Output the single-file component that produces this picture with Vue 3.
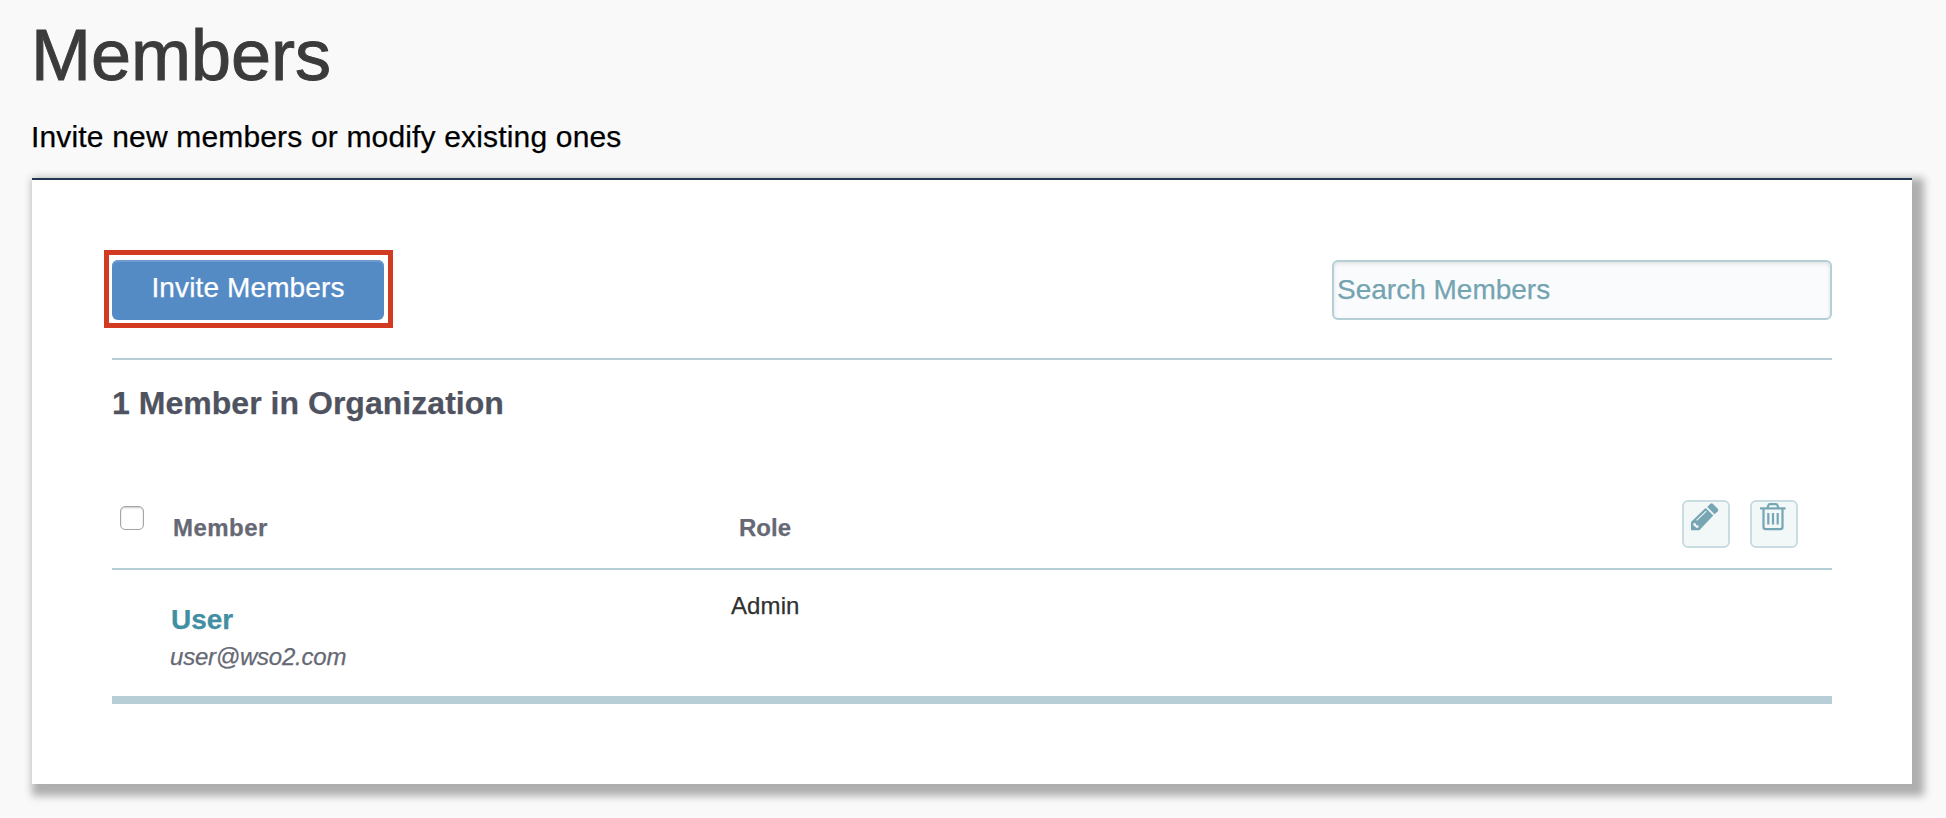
<script setup>
import { ref } from 'vue'

const members = [{ name: 'User', email: 'user@wso2.com', role: 'Admin' }]
const query = ref('')
const allSelected = ref(false)
</script>

<template>
  <main class="page">
    <h1 class="title">Members</h1>
    <p class="subtitle">Invite new members or modify existing ones</p>
    <section class="card">
      <div class="toolbar">
        <div class="highlight">
          <button class="invite" type="button">Invite Members</button>
        </div>
        <input v-model="query" class="search" type="text" placeholder="Search Members" />
      </div>
      <h2 class="count">1 Member in Organization</h2>
      <div class="row head">
        <label class="check"><input v-model="allSelected" type="checkbox" /></label>
        <div class="col-member">Member</div>
        <div class="col-role">Role</div>
        <div class="actions">
          <button class="icon-btn" type="button" aria-label="Edit">
            <svg width="28" height="28" viewBox="0 0 28 28">
              <path d="M0 27.3V18.9L14.6 4.9L22.3 12.5L8.3 27.3Z" fill="#76a5b3" />
              <path d="M16.2 3.9L19.2 1Q20.6-.3 22 1L26.5 5.4Q28 7 26.6 8.5L23.6 11.3Z" fill="#76a5b3" />
              <path d="M5.6 17.3L15.2 8.1" stroke="#f2f7f7" stroke-width="1.1" />
              <path d="M2.4 20L4.6 20.2L5.2 22L7.4 22.6L7.6 24.6L5.6 25L2.4 22.2Z" fill="#f2f7f7" />
            </svg>
          </button>
          <button class="icon-btn" type="button" aria-label="Delete">
            <svg width="28" height="28" viewBox="0 0 28 28" fill="none" stroke="#76a5b3" stroke-width="2.2">
              <path d="M1 5.4H26.6" />
              <path d="M8.4 5L9.2 2.6Q9.6 1.1 11.2 1.1H16.6Q18.2 1.1 18.6 2.6L19.4 5" />
              <path d="M4.5 6V24Q4.5 26.2 6.7 26.2H21.3Q23.5 26.2 23.5 24V6" />
              <path d="M9.3 10V21.5M14 10V21.5M18.7 10V21.5" />
            </svg>
          </button>
        </div>
      </div>
      <div v-for="m in members" :key="m.email" class="row body">
        <div class="identity">
          <div class="name">{{ m.name }}</div>
          <div class="email">{{ m.email }}</div>
        </div>
        <div class="role">{{ m.role }}</div>
      </div>
    </section>
  </main>
</template>

<style>
body {
  margin: 0;
  background: #f9f9f9;
}
</style>

<style scoped>
* {
  box-sizing: border-box;
}
.page {
  height: 818px;
  padding: 19px 34px 0 32px;
  overflow: hidden;
  font-family: 'Liberation Sans', Arial, sans-serif;
  background: #f9f9f9;
  -webkit-text-stroke: 0.25px;
}
.title {
  margin: 0 0 0 -1px;
  font-size: 72px;
  line-height: 72px;
  font-weight: 400;
  color: #3b3b3b;
  -webkit-text-stroke: 1px;
}
.subtitle {
  margin: 31px 0 0 -1px;
  height: 56px;
  font-size: 30px;
  line-height: 30px;
  letter-spacing: 0.165px;
  color: #000;
}
.card {
  height: 606px;
  padding: 80px;
  border-top: 2px solid #1f364e;
  background: #fff;
  box-shadow: 6px 6px 8px 6px rgba(0, 0, 0, 0.3);
}
.toolbar {
  display: flex;
  justify-content: space-between;
  align-items: flex-start;
  height: 100px;
  border-bottom: 2px solid #b7ced7;
}
.highlight {
  margin: -10px 0 0 -8px;
  padding: 5px 4px 3px 3px;
  border: 5px solid #d33a22;
}
.invite {
  display: block;
  width: 272px;
  height: 60px;
  padding: 0 0 4px;
  border: 0;
  border-radius: 6px;
  background: #558bc5;
  box-shadow: inset 0 2px 0 #6b9bd0;
  color: #fff;
  font: 28px/56px 'Liberation Sans', Arial, sans-serif;
  letter-spacing: 0.13px;
}
.search {
  width: 500px;
  height: 60px;
  padding: 0 3px;
  border: 2px solid #b5cfd7;
  border-radius: 6px;
  background: #fafbfd;
  box-shadow: inset 0 2px 4px rgba(0, 0, 0, 0.1);
  font: 28px 'Liberation Sans', Arial, sans-serif;
  color: #75a4b1;
}
.search::placeholder {
  color: #75a4b1;
  opacity: 1;
}
.count {
  margin: 27px 0 81px;
  font-size: 32px;
  line-height: 32px;
  letter-spacing: 0.03px;
  color: #4f535f;
}
.row {
  display: flex;
}
.head {
  height: 70px;
  border-bottom: 2px solid #b5cfd7;
  font-size: 24px;
  line-height: 24px;
  font-weight: 700;
  color: #666974;
}
.check {
  width: 60px;
  padding: 6px 8px 0;
}
.check input {
  display: block;
  appearance: none;
  width: 24px;
  height: 24px;
  margin: 0;
  border: 1px solid #a6a6a6;
  border-radius: 5px;
  background: #fff;
  box-shadow: inset 0 1px 2px rgba(0, 0, 0, 0.22);
}
.col-member {
  width: 567px;
  padding: 16px 0 0 1px;
  letter-spacing: 0.45px;
}
.col-role {
  padding: 16px 0 0;
}
.actions {
  display: flex;
  gap: 20px;
  margin-left: auto;
  padding-right: 34px;
}
.icon-btn {
  display: flex;
  width: 48px;
  height: 48px;
  padding: 1px 0 0 7px;
  border: 2px solid #c9dce1;
  border-radius: 6px;
  background: #f2f7f7;
}
.body {
  height: 134px;
  border-bottom: 8px solid #b7ced6;
}
.identity {
  width: 619px;
  padding: 36px 0 0 58px;
}
.name {
  padding-left: 1px;
  font-size: 28px;
  line-height: 28px;
  font-weight: 700;
  color: #428fa3;
}
.email {
  margin-top: 11px;
  font-size: 24px;
  line-height: 24px;
  font-style: italic;
  letter-spacing: -0.22px;
  color: #666974;
}
.role {
  padding-top: 24px;
  font-size: 24px;
  line-height: 24px;
  letter-spacing: 0.1px;
  color: #303030;
}
</style>
